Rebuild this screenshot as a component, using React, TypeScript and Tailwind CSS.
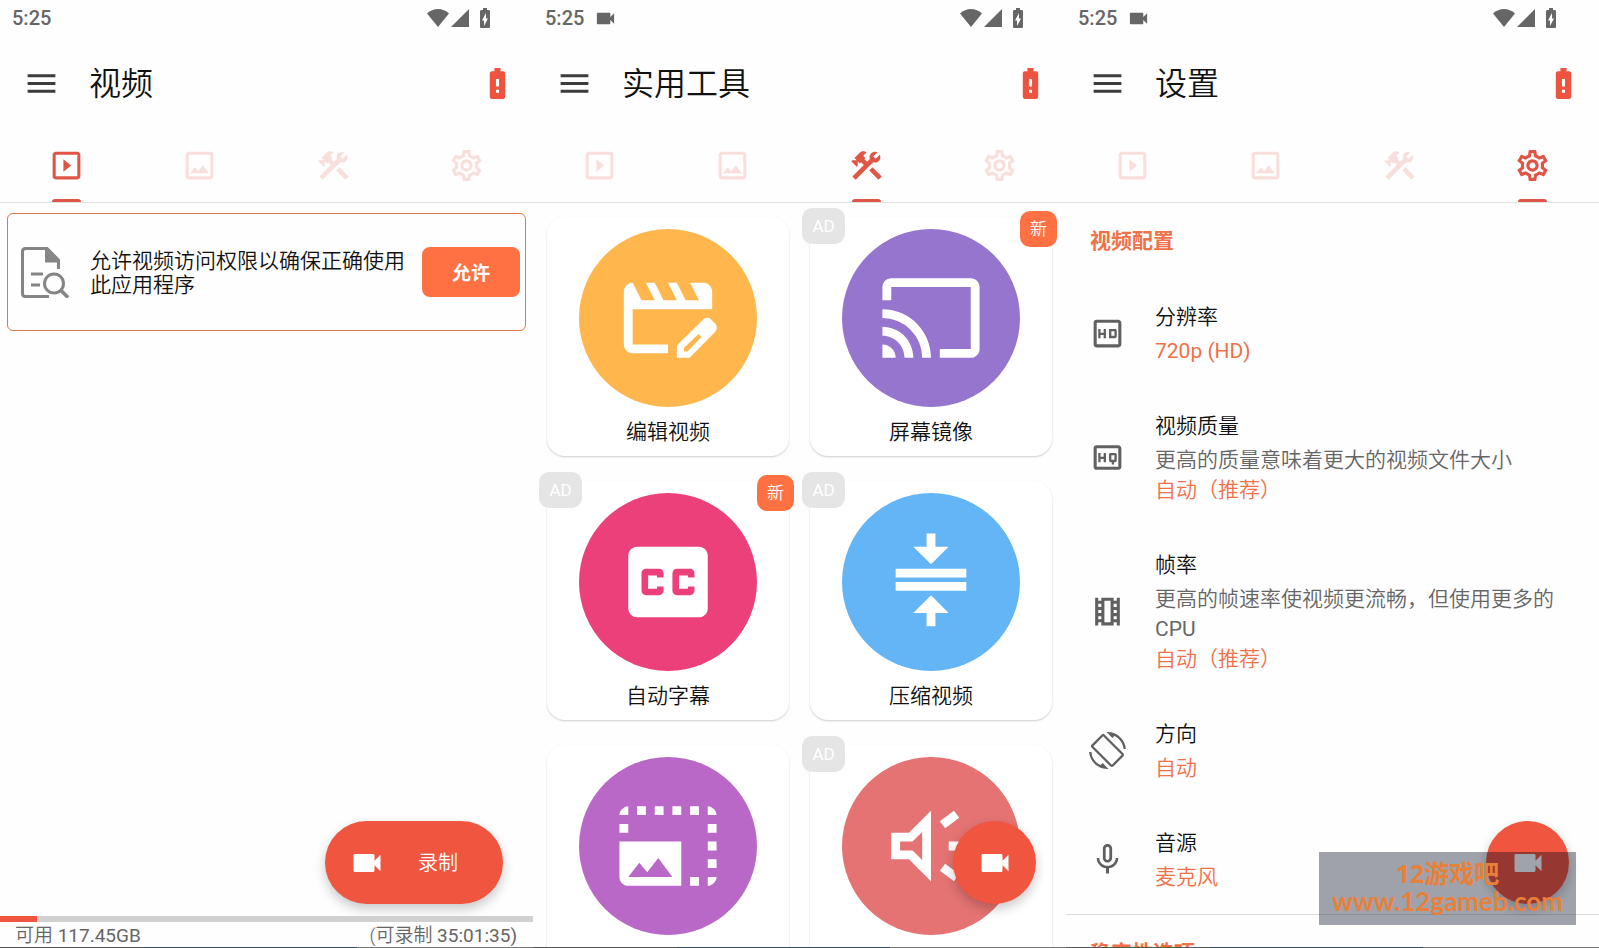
import type { ReactNode } from "react";
import type { IconType } from "react-icons";
import {
  MdBatteryAlert,
  MdBatteryChargingFull,
  MdCast,
  MdClosedCaption,
  MdCompress,
  MdMenu,
  MdMicNone,
  MdOutlineHd,
  MdOutlineHighQuality,
  MdOutlineImage,
  MdOutlineSettings,
  MdOutlineSlideshow,
  MdOutlineTheaters,
  MdPhotoSizeSelectLarge,
  MdScreenRotation,
  MdVideocam,
} from "react-icons/md";

type Glyph = (props: { className?: string }) => ReactNode;

const HammerWrench: Glyph = ({ className }) => (
  <svg viewBox="0 0 24 24" fill="currentColor" className={className} aria-hidden="true">
    <path d="M13.78 15.3L19.78 21.3L21.89 19.14L15.89 13.14L13.78 15.3M17.5 10.1C17.11 10.1 16.69 10.05 16.36 9.91L4.97 21.25L2.86 19.14L10.27 11.74L8.5 9.96L7.78 10.66L6.33 9.25V12.11L5.63 12.81L2.11 9.25L2.81 8.55H5.62L4.22 7.14L7.78 3.58C8.95 2.41 10.83 2.41 12 3.58L9.89 5.74L11.3 7.14L10.59 7.85L12.38 9.63L14.2 7.75C14.06 7.42 14 7 14 6.63C14 4.66 15.56 3.11 17.5 3.11C18.09 3.11 18.61 3.25 19.08 3.53L16.41 6.2L17.91 7.7L20.58 5.03C20.86 5.5 21 6 21 6.63C21 8.55 19.45 10.1 17.5 10.1Z" />
  </svg>
);

const MovieEdit: Glyph = ({ className }) => (
  <svg viewBox="0 0 24 24" fill="currentColor" className={className} aria-hidden="true">
    <path d="M4 4C2.9 4 2 4.9 2 6V18C2 19.1 2.9 20 4 20H12V18H4V10H22V6C22 4.9 21.1 4 20 4H17L19 8H16L14 4H12L14 8H11L9 4H7L9 8H6L4 4Z" />
    <path
      fillRule="evenodd"
      d="M14 21V18.2L19.8 12.5C20.4 11.8 21.2 11.8 21.8 12.4L22.6 13.2C23.2 13.8 23.2 14.6 22.6 15.2L16.9 21H14ZM15.6 19.6H16.4L19.6 16.3L18.9 15.6L15.6 18.8V19.6Z"
    />
  </svg>
);

const Megaphone: Glyph = ({ className }) => (
  <svg viewBox="0 0 24 24" fill="currentColor" className={className} aria-hidden="true">
    <path d="M10 8.83v6.34L7.83 13H5v-2h2.83L10 8.83M12 4L7 9H3v6h4l5 5V4z" />
    <path d="M16 11h4v2h-4zM14 17.61L17.2 20L18.4 18.4L15.2 16ZM18.4 5.6L17.2 4L14 6.4L15.2 8Z" />
  </svg>
);

const DocumentSearch: Glyph = ({ className }) => (
  <svg viewBox="0 0 48 51" fill="none" stroke="currentColor" strokeWidth="3" className={className} aria-hidden="true">
    <path d="M28 49.500H4.500Q1.500 49.500 1.500 46.500V4.500Q1.500 1.500 4.500 1.500H26L37.500 13V22" />
    <path d="M24 1.500L38.500 15.500H24Z" fill="currentColor" stroke="none" />
    <path d="M10 27H22M10 38H19" />
    <circle cx="33" cy="36.500" r="9.500" />
    <path d="M40 43.500L47 50.500" strokeWidth="3.500" />
  </svg>
);

const Wifi: Glyph = ({ className }) => (
  <svg viewBox="0 0 22 18" fill="currentColor" className={className} aria-hidden="true">
    <path d="M11 18L0 4.500C3 1.500 7 0 11 0S19 1.500 22 4.500Z" />
  </svg>
);

const Signal: Glyph = ({ className }) => (
  <svg viewBox="0 0 18 18" fill="currentColor" className={className} aria-hidden="true">
    <path d="M18 0V18H0Z" />
  </svg>
);

function Latin({ children }: { children: ReactNode }) {
  return <span className="font-normal">{children}</span>;
}

const tabs: { label: string; Icon: IconType | Glyph }[] = [
  { label: "视频", Icon: MdOutlineSlideshow },
  { label: "图片", Icon: MdOutlineImage },
  { label: "实用工具", Icon: HammerWrench },
  { label: "设置", Icon: MdOutlineSettings },
];

function Screen({
  title,
  active,
  recording,
  children,
}: {
  title: string;
  active: number;
  recording?: boolean;
  children: ReactNode;
}) {
  return (
    <section className="relative flex h-full min-w-0 flex-1 flex-col overflow-hidden">
      <div className="flex h-9 shrink-0 items-center pl-3 pr-9 text-[#666]">
        <span className="text-xl font-medium leading-9">5:25</span>
        {recording && <MdVideocam className="ml-2.5 size-[23px]" />}
        <Wifi className="ml-auto h-[18px] w-[22px]" />
        <Signal className="ml-0.5 size-[18px]" />
        <MdBatteryChargingFull className="ml-1 size-6" />
      </div>
      <header className="flex h-[94px] shrink-0 items-center pl-[23px] pr-[17px]">
        <button type="button" aria-label="菜单" className="text-[#3c3c3c]">
          <MdMenu className="size-[37px]" />
        </button>
        <h1 className="ml-[29px] flex-1 pt-0.5 text-[32px] leading-10 text-[#111]">{title}</h1>
        <button type="button" aria-label="电量提醒" className="text-[#ee5340]">
          <MdBatteryAlert className="size-[37px]" />
        </button>
      </header>
      <nav className="flex h-[73px] shrink-0 border-b border-[#e2e2e2]">
        {tabs.map(({ label, Icon }, i) => (
          <button
            key={label}
            type="button"
            aria-label={label}
            className={
              i === active
                ? "flex flex-1 flex-col items-center pt-[17px] text-[#e05545]"
                : "flex flex-1 flex-col items-center pt-[17px] text-[#f9dfdc]"
            }
          >
            <Icon className="size-[37px] shrink-0" />
            {i === active && <span className="mt-auto h-[3px] w-[29px] rounded-t bg-[#e05545]" />}
          </button>
        ))}
      </nav>
      {children}
      <div className="absolute inset-x-0 bottom-0 flex h-px">
        <span className="w-[27%] bg-[#555]" />
        <span className="w-[40%] bg-[#34505e]" />
        <span className="flex-1 bg-[#777]" />
      </div>
    </section>
  );
}

function RecordFab() {
  return (
    <button
      type="button"
      aria-label="录制"
      className="absolute bottom-11 right-[30px] flex size-[83px] items-center justify-center rounded-full bg-[#f0553f] text-white shadow-[0_5px_12px_rgba(0,0,0,0.22)]"
    >
      <MdVideocam className="size-9" />
    </button>
  );
}

function VideoScreen() {
  return (
    <Screen title="视频" active={0}>
      <div className="mx-[7px] mt-2.5 flex h-[118px] items-center rounded-md border border-[#e07850] pl-[13px] pr-[5px]">
        <DocumentSearch className="h-[51px] w-12 shrink-0 text-[#858585]" />
        <p className="ml-[21px] flex-1 pt-0.5 text-[21px] leading-6 text-[#111]">允许视频访问权限以确保正确使用此应用程序</p>
        <button type="button" className="h-[50px] w-[98px] shrink-0 rounded-lg bg-[#ff7043] pt-1 text-[19px] font-bold text-white">
          允许
        </button>
      </div>
      <button
        type="button"
        className="mb-3 ml-auto mr-[30px] mt-auto flex h-[83px] w-[178px] shrink-0 items-center rounded-full bg-[#f0553f] pl-6 text-white shadow-[0_5px_12px_rgba(0,0,0,0.22)]"
      >
        <MdVideocam className="size-9" />
        <span className="ml-[33px] text-xl">录制</span>
      </button>
      <div className="h-1.5 shrink-0 bg-[#d0d0d0]" role="progressbar" aria-label="存储空间" aria-valuenow={7}>
        <div className="h-full w-[7%] bg-[#f0553f]" />
      </div>
      <div className="flex h-[26px] shrink-0 items-center justify-between pl-[15px] pr-4 pt-0.5 text-[19px] leading-6 text-[#666]">
        <span>
          可用 <Latin>117.45GB</Latin>
        </span>
        <span>
          (可录制 <Latin>35:01:35)</Latin>
        </span>
      </div>
    </Screen>
  );
}

const tools: { label: string; Icon: IconType | Glyph; color: string; ad?: boolean; fresh?: boolean }[] = [
  { label: "编辑视频", Icon: MovieEdit, color: "bg-[#ffb74d]" },
  { label: "屏幕镜像", Icon: MdCast, color: "bg-[#9575cd]", ad: true, fresh: true },
  { label: "自动字幕", Icon: MdClosedCaption, color: "bg-[#ec407a]", ad: true, fresh: true },
  { label: "压缩视频", Icon: MdCompress, color: "bg-[#64b5f6]", ad: true },
  { label: "调整图片", Icon: MdPhotoSizeSelectLarge, color: "bg-[#ba68c8]" },
  { label: "音量增强", Icon: Megaphone, color: "bg-[#e57373]", ad: true },
];

function ToolsScreen() {
  return (
    <Screen title="实用工具" active={2} recording>
      <div className="grid grid-cols-2 gap-x-[21px] gap-y-[25px] px-3.5 pt-3.5">
        {tools.map(({ label, Icon, color, ad, fresh }) => (
          <a
            key={label}
            href="#"
            className="relative flex h-[239px] flex-col items-center rounded-[18px] bg-white pt-3 shadow-[0_1px_2px_rgba(0,0,0,0.2)]"
          >
            <span className={`flex size-[178px] items-center justify-center rounded-full text-white ${color}`}>
              <Icon className="size-[106px]" />
            </span>
            <span className="mt-2.5 text-[21px] leading-[30px] text-[#111]">{label}</span>
            {ad && (
              <span className="absolute -left-2 -top-[9px] flex h-9 w-[43px] items-center justify-center rounded-[10px] bg-[#e5e5e5] pt-0.5 text-[17px] font-normal text-white">
                AD
              </span>
            )}
            {fresh && (
              <span className="absolute -right-[5px] -top-1.5 flex h-9 w-[37px] items-center justify-center rounded-[10px] bg-[#ff7043] pt-0.5 text-[17px] text-white">
                新
              </span>
            )}
          </a>
        ))}
      </div>
      <RecordFab />
    </Screen>
  );
}

const settings: { title: string; desc?: ReactNode; value: ReactNode; Icon: IconType }[] = [
  { title: "分辨率", value: <Latin>720p (HD)</Latin>, Icon: MdOutlineHd },
  { title: "视频质量", desc: "更高的质量意味着更大的视频文件大小", value: "自动（推荐）", Icon: MdOutlineHighQuality },
  {
    title: "帧率",
    desc: (
      <>
        更高的帧速率使视频更流畅，但使用更多的 <Latin>CPU</Latin>
      </>
    ),
    value: "自动（推荐）",
    Icon: MdOutlineTheaters,
  },
  { title: "方向", value: "自动", Icon: MdScreenRotation },
  { title: "音源", value: "麦克风", Icon: MdMicNone },
];

function SettingsScreen() {
  return (
    <Screen title="设置" active={3} recording>
      <h2 className="shrink-0 pl-6 text-[21px] font-bold leading-[76px] text-[#f07048]">视频配置</h2>
      <ul className="shrink-0">
        {settings.map(({ title, desc, value, Icon }) => (
          <li key={title} className="flex items-center pb-[22px] pl-[23px] pr-6 pt-[23px]">
            <Icon className="mb-0.5 size-[37px] shrink-0 text-[#606060]" />
            <div className="ml-[29px] text-[21px] leading-[30px]">
              <h3 className="text-[#111]">{title}</h3>
              <div className="mt-1">
                {desc && <p className="text-[#666]">{desc}</p>}
                <p className="text-[#f07048]">{value}</p>
              </div>
            </div>
          </li>
        ))}
      </ul>
      <h2 className="shrink-0 border-t border-[#dcdcdc] pl-6 text-[21px] font-bold leading-[76px] text-[#f07048]">稳定性选项</h2>
      <RecordFab />
      <div className="absolute bottom-[23px] right-[23px] flex h-[73px] w-[257px] flex-col items-center justify-center bg-[rgba(0,5,30,0.37)] pb-1 text-[#e8803a]">
        <span className="font-['Open_Sans','Noto_Sans_CJK_SC',sans-serif] text-[25px] font-bold leading-7">12游戏吧</span>
        <span className="font-['Lato',sans-serif] text-[26px] font-bold leading-7">www.12gameb.com</span>
      </div>
    </Screen>
  );
}

export default function App() {
  return (
    <main
      className="relative flex h-screen overflow-hidden bg-[#fefefe] font-['Roboto','Noto_Sans_CJK_SC',sans-serif] font-[350]"
      lang="zh-CN"
    >
      <VideoScreen />
      <ToolsScreen />
      <SettingsScreen />
    </main>
  );
}
